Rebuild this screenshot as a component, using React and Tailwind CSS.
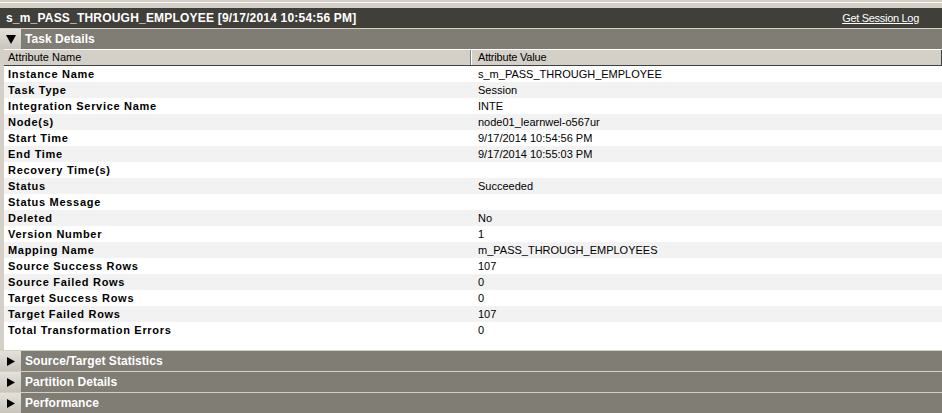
import React from "react";

const rows = [
  ["Instance Name", "s_m_PASS_THROUGH_EMPLOYEE"],
  ["Task Type", "Session"],
  ["Integration Service Name", "INTE"],
  ["Node(s)", "node01_learnwel-o567ur"],
  ["Start Time", "9/17/2014 10:54:56 PM"],
  ["End Time", "9/17/2014 10:55:03 PM"],
  ["Recovery Time(s)", ""],
  ["Status", "Succeeded"],
  ["Status Message", ""],
  ["Deleted", "No"],
  ["Version Number", "1"],
  ["Mapping Name", "m_PASS_THROUGH_EMPLOYEES"],
  ["Source Success Rows", "107"],
  ["Source Failed Rows", "0"],
  ["Target Success Rows", "0"],
  ["Target Failed Rows", "107"],
  ["Total Transformation Errors", "0"],
];

function Down() {
  return (
    <svg width="10" height="9" viewBox="0 0 10 9">
      <polygon points="0,0 10,0 5,9" fill="#000" />
    </svg>
  );
}
function Right() {
  return (
    <svg width="8" height="9" viewBox="0 0 8 9">
      <polygon points="0,0 8,4.5 0,9" fill="#000" />
    </svg>
  );
}

function Section({ title, open }) {
  return (
    <div className="flex h-[20px]">
      <div className="w-[21px] flex items-center justify-center bg-gradient-to-b from-[#e4e1da] to-[#c9c5bc]">
        {open ? <Down /> : <Right />}
      </div>
      <div className="flex-1 bg-[#807d75] flex items-center pl-[4px] text-white font-bold text-[12px] tracking-[0.05px]">
        {title}
      </div>
    </div>
  );
}

export default function App() {
  return (
    <div
      className="w-[942px] h-[413px] overflow-hidden bg-[#d4d0c8] flex flex-col text-black"
      style={{ fontFamily: '"Liberation Sans", Arial, sans-serif' }}
    >
      <div className="h-[8px] pt-[2px]">
        <div className="h-[1px] bg-white" />
      </div>
      <div className="h-[20px] bg-[#403f3a] flex items-center justify-between pl-[6px] pr-[23px]">
        <span className="text-white font-bold text-[12px] tracking-[0.2px]">
          s_m_PASS_THROUGH_EMPLOYEE [9/17/2014 10:54:56 PM]
        </span>
        <span className="text-white text-[11px] tracking-[-0.3px] underline">Get Session Log</span>
      </div>
      <div className="h-[1px] bg-[#d4d0c8]" />
      <Section title="Task Details" open />
      <div className="h-[301px] ml-[4px] bg-white flex flex-col">
        <div className="h-[17px] flex bg-[#d4d0c8] border-t border-white border-b border-b-[#404040] text-[11px]">
          <div className="w-[467px] border-r border-r-[#808080] pl-[4px] flex items-center">Attribute Name</div>
          <div className="flex-1 border-l border-l-white border-r border-r-[#404040] pl-[6px] flex items-center tracking-[-0.2px]">
            Attribute Value
          </div>
        </div>
        {rows.map(([k, v], i) => (
          <div
            key={k}
            className={`h-[16px] flex items-center text-[11px] ${i % 2 === 1 ? "bg-[#f2f2f2]" : "bg-white"}`}
          >
            <div className="w-[470px] pl-[4px] font-bold tracking-[0.7px]">{k}</div>
            <div className="flex-1 pl-[4px]">{v}</div>
          </div>
        ))}
      </div>
      <div className="h-[1px] bg-[#d4d0c8]" />
      <Section title="Source/Target Statistics" />
      <div className="h-[1px] bg-[#d4d0c8]" />
      <Section title="Partition Details" />
      <div className="h-[1px] bg-[#d4d0c8]" />
      <Section title="Performance" />
    </div>
  );
}
